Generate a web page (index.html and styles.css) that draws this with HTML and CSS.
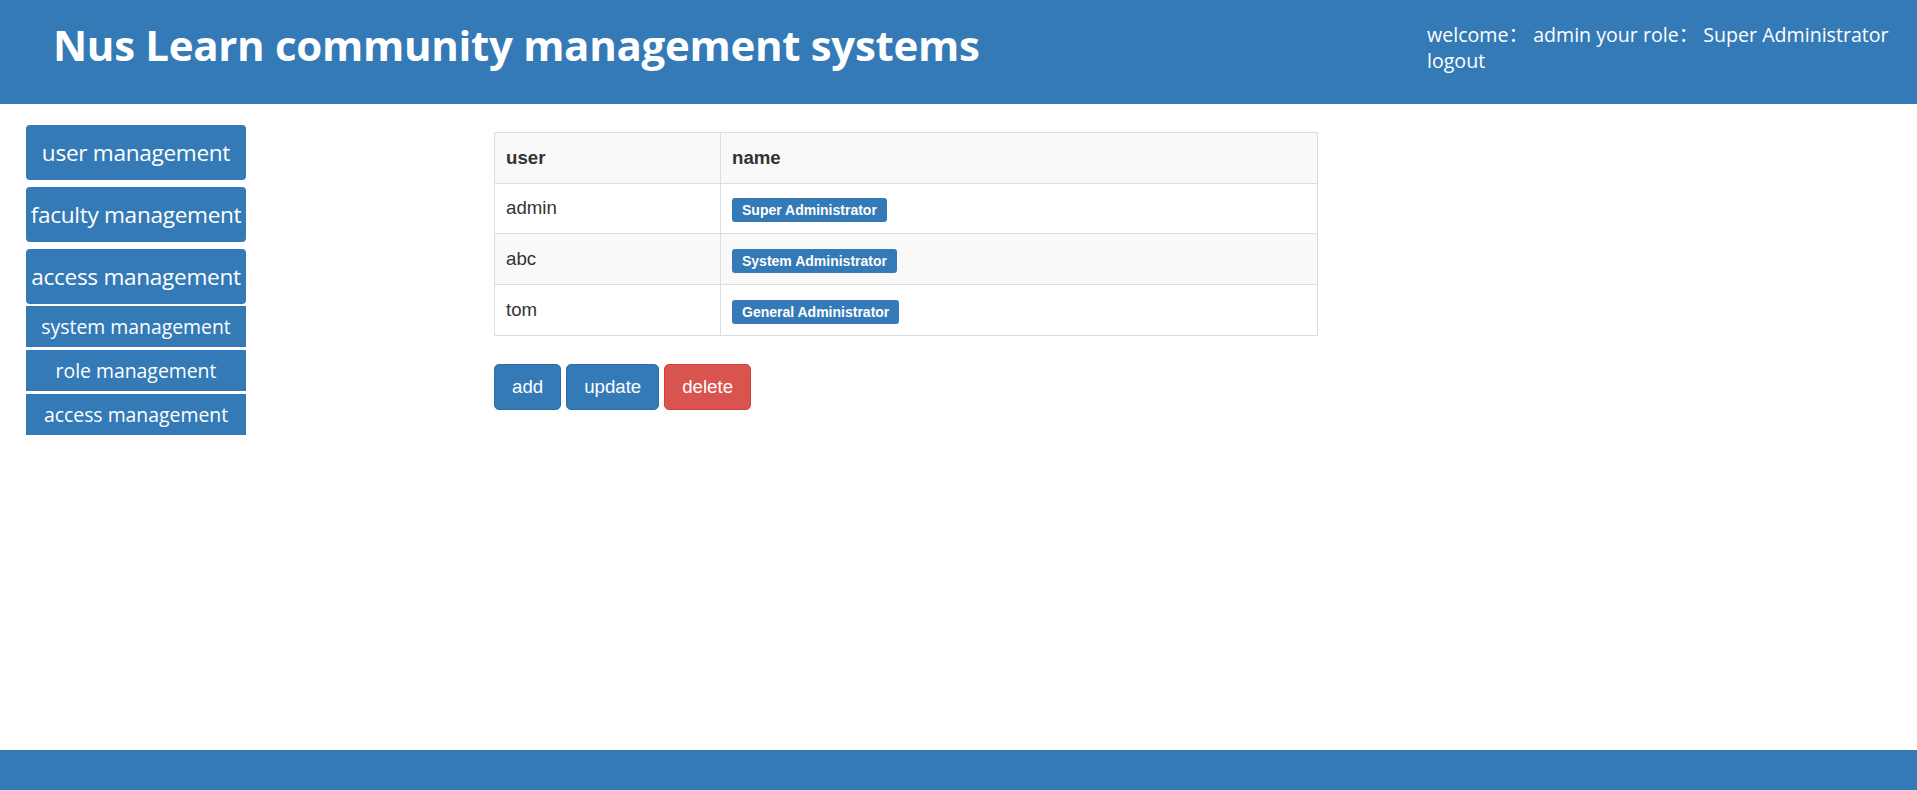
FILE: index.html
```html
<!DOCTYPE html>
<html>
<head>
<meta charset="utf-8">
<title>Nus Learn community management systems</title>
<link rel="stylesheet" href="styles.css">
</head>
<body>
<div class="page">
  <header class="topbar">
    <h1 class="brand">Nus Learn community management systems</h1>
    <div class="userinfo">
      <div>welcome：&nbsp;admin your role：&nbsp;Super Administrator</div>
      <a class="logout" href="#">logout</a>
    </div>
  </header>
  <div class="main">
    <nav class="sidebar">
      <a class="nav-btn" href="#">user management</a>
      <a class="nav-btn" href="#">faculty management</a>
      <a class="nav-btn" href="#">access management</a>
      <div class="subnav">
        <a class="sub-btn" href="#">system management</a>
        <a class="sub-btn" href="#">role management</a>
        <a class="sub-btn" href="#">access management</a>
      </div>
    </nav>
    <section class="content">
      <table class="grid">
        <tr class="striped"><th class="col-user">user</th><th>name</th></tr>
        <tr><td>admin</td><td><span class="label">Super Administrator</span></td></tr>
        <tr class="striped"><td>abc</td><td><span class="label">System Administrator</span></td></tr>
        <tr><td>tom</td><td><span class="label">General Administrator</span></td></tr>
      </table>
      <div class="actions">
        <button class="btn btn-primary">add</button>
        <button class="btn btn-primary">update</button>
        <button class="btn btn-danger">delete</button>
      </div>
    </section>
  </div>
  <footer class="footer"></footer>
</div>
</body>
</html>
```
FILE: styles.css
```css
html, body {
  margin: 0;
  padding: 0;
  height: 100%;
}
body {
  font-family: "Liberation Sans", Arial, sans-serif;
  color: #333;
  background: #fff;
}
.page {
  display: flex;
  flex-direction: column;
  min-height: 100vh;
}
.topbar {
  background: #337ab7;
  height: 104px;
  display: flex;
  justify-content: space-between;
  align-items: flex-start;
  padding: 0 20px 0 53px;
  box-sizing: border-box;
  color: #fff;
  font-family: "Open Sans", "Noto Sans CJK SC", sans-serif;
}
.brand {
  margin: 17px 0 0 0;
  font-size: 42px;
  font-weight: 700;
  line-height: 56px;
  letter-spacing: -0.3px;
  white-space: nowrap;
}
.userinfo {
  margin-top: 22px;
  font-size: 19.6px;
  line-height: 26px;
  width: 470px;
  white-space: nowrap;
}
.logout {
  color: #fff;
  text-decoration: none;
  display: block;
}
.main {
  display: flex;
  align-items: flex-start;
  padding: 21px 0 0 26px;
}
.sidebar {
  width: 220px;
  display: flex;
  flex-direction: column;
  gap: 7px;
  font-family: "Open Sans", "Noto Sans", sans-serif;
}
.nav-btn {
  display: flex;
  align-items: center;
  justify-content: center;
  height: 55px;
  background: #337ab7;
  color: #fff;
  text-decoration: none;
  border-radius: 4px;
  font-size: 22.6px;
  white-space: nowrap;
  letter-spacing: -0.3px;
}
.subnav {
  display: flex;
  flex-direction: column;
  gap: 3px;
  margin-top: -5px;
}
.sub-btn {
  display: flex;
  align-items: center;
  justify-content: center;
  height: 41px;
  background: #337ab7;
  color: #fff;
  text-decoration: none;
  font-size: 19.4px;
  font-weight: 500;
  white-space: nowrap;
}
.content {
  margin-left: 248px;
  padding-top: 7px;
  width: 824px;
}
.grid {
  width: 824px;
  border-collapse: collapse;
  font-size: 18.67px;
  line-height: 26.67px;
  color: #333;
}
.grid th, .grid td {
  border: 1px solid #ddd;
  padding: 11.5px 11px;
  text-align: left;
  vertical-align: top;
}
.grid th {
  font-weight: 700;
}
.col-user {
  width: 203px;
}
.striped {
  background: #f9f9f9;
}
.label {
  display: inline-block;
  background: #337ab7;
  color: #fff;
  font-size: 14px;
  font-weight: 700;
  line-height: 1;
  padding: 5px 10px 5px;
  border-radius: 3px;
  vertical-align: middle;
  position: relative;
  top: 1px;
}
.actions {
  margin-top: 28px;
  display: flex;
  gap: 5px;
}
.btn {
  font-family: "Liberation Sans", Arial, sans-serif;
  font-size: 18.67px;
  line-height: 26.67px;
  padding: 9px 17px;
  border-radius: 5px;
  border: 1px solid transparent;
  color: #fff;
  cursor: pointer;
}
.btn-primary {
  background: #337ab7;
  border-color: #2e6da4;
}
.btn-danger {
  background: #d9534f;
  border-color: #d43f3a;
}
.footer {
  margin-top: auto;
  height: 40px;
  background: #337ab7;
}
```
